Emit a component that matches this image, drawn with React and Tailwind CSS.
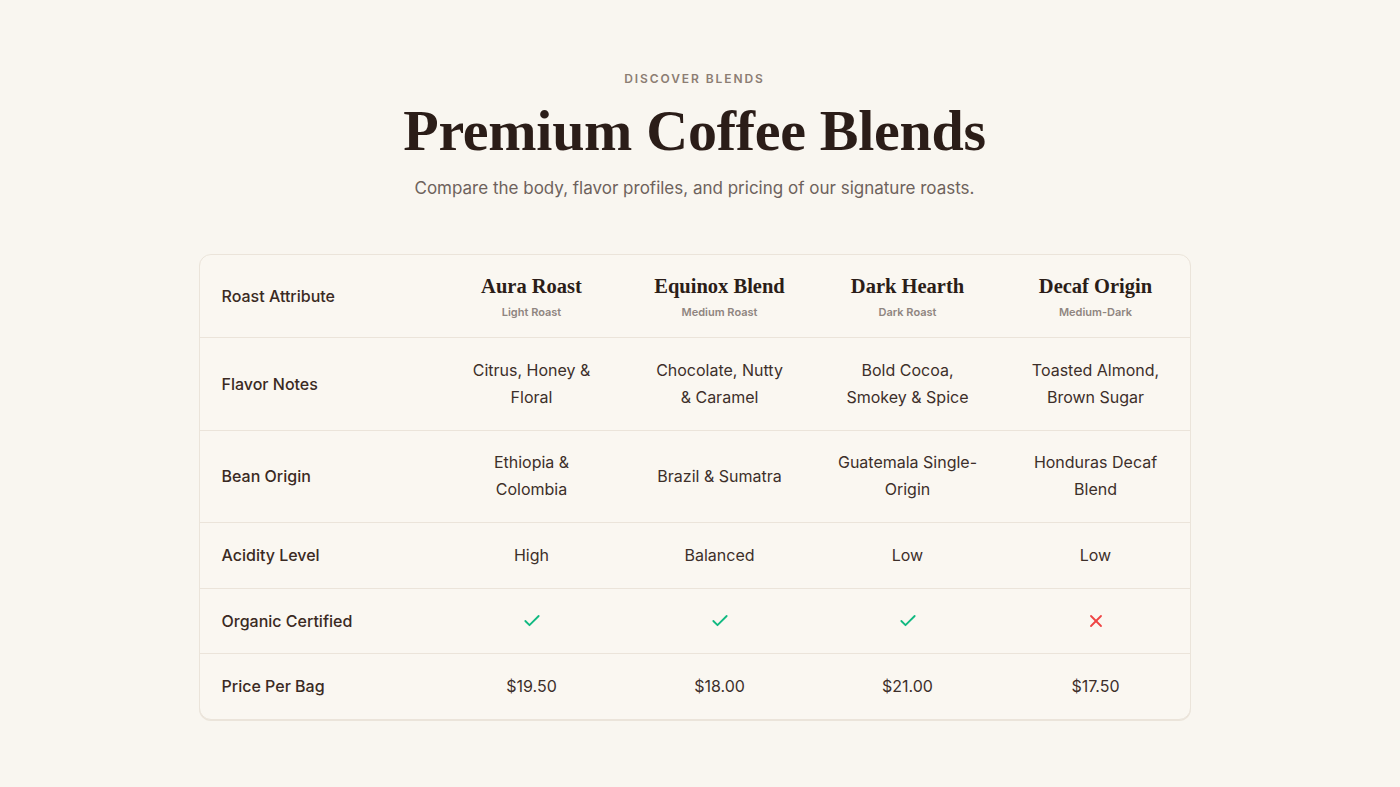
import React from "react";
import { Check, X } from "lucide-react";

const blends = [
  { name: "Aura Roast", roast: "Light Roast" },
  { name: "Equinox Blend", roast: "Medium Roast" },
  { name: "Dark Hearth", roast: "Dark Roast" },
  { name: "Decaf Origin", roast: "Medium-Dark" },
];

const rows = [
  {
    label: "Flavor Notes",
    values: [
      ["Citrus, Honey &", "Floral"],
      ["Chocolate, Nutty", "& Caramel"],
      ["Bold Cocoa,", "Smokey & Spice"],
      ["Toasted Almond,", "Brown Sugar"],
    ],
  },
  {
    label: "Bean Origin",
    values: [
      ["Ethiopia &", "Colombia"],
      ["Brazil & Sumatra"],
      ["Guatemala Single-", "Origin"],
      ["Honduras Decaf", "Blend"],
    ],
  },
  { label: "Acidity Level", values: [["High"], ["Balanced"], ["Low"], ["Low"]] },
  { label: "Organic Certified", values: [true, true, true, false] },
  { label: "Price Per Bag", values: [["$19.50"], ["$18.00"], ["$21.00"], ["$17.50"]] },
];

const sans = "font-['Inter','Liberation_Sans',sans-serif]";
const serif = "font-['Liberation_Serif','DejaVu_Serif',serif]";

export default function App() {
  return (
    <div className={`min-h-screen bg-[#f9f6f0] ${sans} pt-[71px] pb-16 pr-[11px]`}>
      {/* HEADING */}
      <div className="text-center">
        <p className="text-[12px] leading-4 font-semibold tracking-[0.16em] text-[#8c7d73] uppercase">
          Discover Blends
        </p>
        <h1 className={`${serif} mt-[13px] text-[58px] leading-[62px] font-bold text-[#2b1d18] tracking-[-0.005em]`}>
          Premium Coffee Blends
        </h1>
        <p className="mt-[14px] text-[17px] leading-6 text-[#6e625c]">
          Compare the body, flavor profiles, and pricing of our signature roasts.
        </p>
      </div>

      {/* TABLE */}
      <div className="mx-auto mt-[54px] w-[992px] rounded-xl border border-[#ebe4da] bg-[#faf7f1] shadow-[0_1px_0_#ebe4da] overflow-hidden">
        <div className="grid grid-cols-[238px_1fr_1fr_1fr_1fr] border-b border-[#ebe4da]">
          <div className="flex items-center pl-[22px] text-[16px] font-medium text-[#3a2a23]">
            Roast Attribute
          </div>
          {blends.map((b) => (
            <div key={b.name} className="py-[18px] text-center">
              <div className={`${serif} text-[20.5px] leading-[26px] font-bold text-[#2b1d18]`}>
                {b.name}
              </div>
              <div className="mt-[6px] text-[11px] leading-[14px] font-semibold text-[#8f8580]">
                {b.roast}
              </div>
            </div>
          ))}
        </div>

        {rows.map((row, i) => (
          <div
            key={row.label}
            className={`grid grid-cols-[238px_1fr_1fr_1fr_1fr] ${
              i < rows.length - 1 ? "border-b border-[#ebe4da]" : ""
            }`}
          >
            <div className="flex items-center pl-[22px] text-[16px] font-medium text-[#3a2a23]">
              {row.label}
            </div>
            {row.values.map((v, j) => (
              <div
                key={j}
                className="flex flex-col items-center justify-center py-[18.75px] text-center text-[16px] leading-[27px] text-[#3d2f2a]"
              >
                {v === true ? (
                  <span className="flex h-[27px] items-center">
                    <Check size={20} strokeWidth={2.2} className="text-[#10b981]" />
                  </span>
                ) : v === false ? (
                  <span className="flex h-[27px] items-center">
                    <X size={20} strokeWidth={2.2} className="text-[#ef4444]" />
                  </span>
                ) : (
                  v.map((line) => <span key={line}>{line}</span>)
                )}
              </div>
            ))}
          </div>
        ))}
      </div>
    </div>
  );
}
